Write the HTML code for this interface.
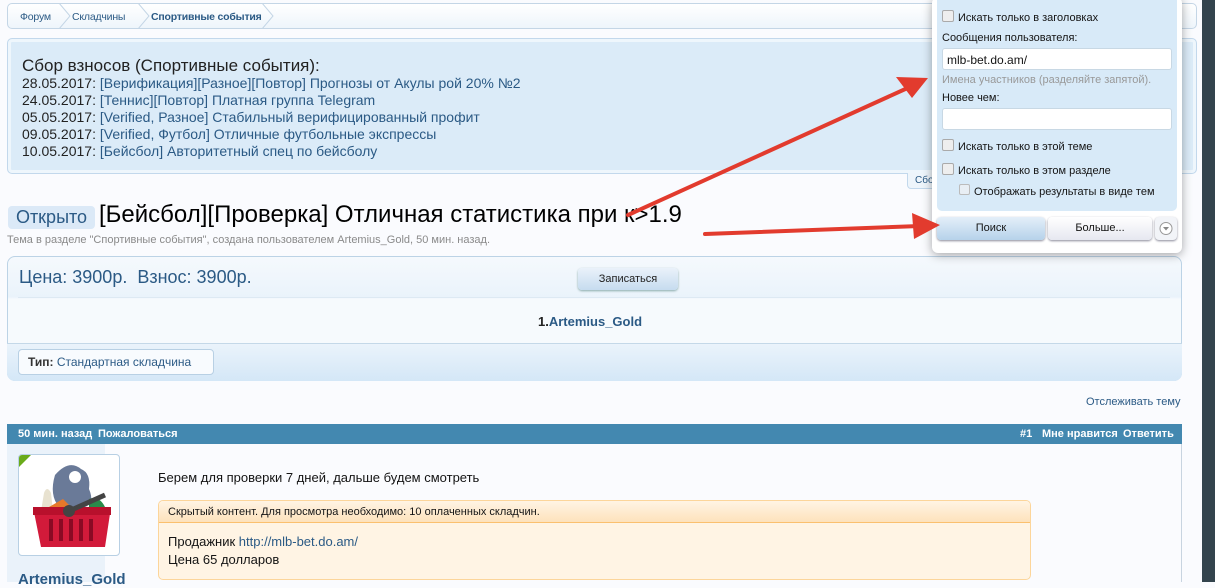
<!DOCTYPE html>
<html><head><meta charset="utf-8"><style>
*{box-sizing:border-box;margin:0;padding:0}
body{width:1215px;height:582px;overflow:hidden;background:#fafbfe;font-family:"Liberation Sans",Arial,sans-serif;position:relative;color:#141414}
.a{position:absolute}
a{color:#2b5a85;text-decoration:none}
.crumb{left:7px;top:3px;width:1190px;height:26px;border:1px solid #c4d6e6;border-radius:5px;background:linear-gradient(#fff,#eef5fb);font-size:10.5px;color:#2b5a85;letter-spacing:-0.2px}
.crumb span{position:absolute;top:7px;white-space:nowrap}
.notice{left:7px;top:38px;width:1190px;height:136px;border:1px solid #c2d8ec;border-radius:5px;background:#dbebf8;box-shadow:inset 0 0 0 3px #eef6fc}
.notice .t{position:absolute;left:14px;top:17px;font-size:17px;color:#222}
.notice .l{position:absolute;left:14px;font-size:14px;color:#222}
.notice .l a{color:#2b5a85}
.badge{left:8px;top:206px;width:87px;height:23px;background:#dbe9f7;border-radius:4px;font-size:18px;color:#2b5a85;text-align:center;line-height:23px}
.title{left:99px;top:201px;font-size:24px;color:#000;white-space:nowrap}
.sub{left:7px;top:234px;font-size:11px;color:#8a8a8a}
.pbox{left:7px;top:256px;width:1175px;height:125px;border:1px solid #bcd3e6;border-radius:8px;background:linear-gradient(#f5f9fd,#eaf3fb 40px,#f6fafd 42px)}
.btn{left:578px;top:268px;width:100px;height:22px;border-radius:4px;background:linear-gradient(#eaf2fa,#c6dcef);box-shadow:0 1px 2px #8aa;font-size:11px;text-align:center;line-height:22px;color:#222}
.hdr{left:7px;top:424px;width:1175px;height:20px;background:#4388b0;color:#fff;font-size:11px;font-weight:bold}
.hdr span{position:absolute;top:4px}
</style></head><body>
<div class="a crumb"><span style="left:12px">Форум</span><span style="left:64px">Складчины</span><span style="left:143px;font-weight:bold">Спортивные события</span>
<svg class="a" style="left:50px;top:-1px" width="14" height="26"><path d="M1 0 L12 13 L1 26" fill="none" stroke="#c4d6e6"/></svg>
<svg class="a" style="left:129px;top:-1px" width="14" height="26"><path d="M1 0 L12 13 L1 26" fill="none" stroke="#c4d6e6"/></svg>
<svg class="a" style="left:253px;top:-1px" width="14" height="26"><path d="M1 0 L12 13 L1 26" fill="none" stroke="#c4d6e6"/></svg>
</div>
<div class="a notice">
<div class="t">Сбор взносов (Спортивные события):</div>
<div class="l" style="top:36px">28.05.2017: <a>[Верификация][Разное][Повтор] Прогнозы от Акулы рой 20% №2</a></div>
<div class="l" style="top:53px">24.05.2017: <a>[Теннис][Повтор] Платная группа Telegram</a></div>
<div class="l" style="top:70px">05.05.2017: <a>[Verified, Разное] Стабильный верифицированный профит</a></div>
<div class="l" style="top:87px">09.05.2017: <a>[Verified, Футбол] Отличные футбольные экспрессы</a></div>
<div class="l" style="top:104px">10.05.2017: <a>[Бейсбол] Авторитетный спец по бейсболу</a></div>
</div>
<div class="a" style="left:907px;top:173px;width:40px;height:16px;border:1px solid #c2d8ec;border-top:none;border-radius:0 0 4px 4px;background:#eef5fb;font-size:10px;color:#2b5a85;padding:2px 0 0 7px;overflow:hidden">Сбор</div>
<div class="a badge">Открыто</div>
<div class="a title">[Бейсбол][Проверка] Отличная статистика при к&gt;1.9</div>
<div class="a sub">Тема в разделе "Спортивные события", создана пользователем Artemius_Gold, 50 мин. назад.</div>
<div class="a pbox">
<div class="a" style="left:11px;top:10px;font-size:18px;color:#2b5a85">Цена: 3900р.&nbsp; Взнос: 3900р.</div>
<div class="a" style="left:10px;top:40px;width:1152px;height:1px;background:#dde9f3"></div>
<div class="a" style="left:530px;top:57px;font-size:13px;font-weight:bold;color:#222">1.<a>Artemius_Gold</a></div>
<div class="a" style="left:-1px;top:86px;width:1175px;height:38px;border-top:1px solid #c4d8e8;border-radius:0 0 8px 8px;background:linear-gradient(#eaf3fb,#d4e7f7)"></div>
<div class="a" style="left:10px;top:92px;width:196px;height:26px;border:1px solid #b8d0e4;border-radius:4px;background:#f8fbfe;font-size:12px;padding:5px 9px;color:#2b5a85;white-space:nowrap"><b style="color:#333">Тип:</b> Стандартная складчина</div>
</div>
<div class="a btn">Записаться</div>
<div class="a" style="left:1086px;top:396px;font-size:11px;color:#2b5a85">Отслеживать тему</div>
<div class="a hdr"><span style="left:11px">50 мин. назад</span><span style="left:91px">Пожаловаться</span><span style="left:1013px">#1</span><span style="left:1035px">Мне нравится</span><span style="left:1116px">Ответить</span></div>
<div class="a" style="left:1181px;top:444px;width:1px;height:138px;background:#c8d4e0"></div>
<div class="a" style="left:7px;top:444px;width:98px;height:138px;background:#eaf2fa"></div>
<div class="a" style="left:18px;top:454px;width:102px;height:102px;border:1px solid #b8d0e4;border-radius:4px;background:#fff;overflow:hidden">
<svg width="100" height="100"><path d="M0 0 L12 0 L0 12Z" fill="#6aab1a"/>
<path d="M36 20 Q50 4 62 14 Q72 18 70 34 Q76 48 66 52 L40 52 Q30 40 36 20Z" fill="#6a7a98"/>
<circle cx="56" cy="22" r="6" fill="#fff"/><path d="M25 38 Q28 30 32 38 L34 56 L22 56Z" fill="#e8e2d0"/>
<path d="M30 52 L44 44 L54 54Z" fill="#e6782a"/><path d="M70 44 Q80 40 86 52 L70 56Z" fill="#2a8a4a"/>
<path d="M14 52 L92 52 L86 92 L22 92Z" fill="#d21a3a"/><path d="M14 52 L92 52 L92 60 L14 60Z" fill="#b8102c"/>
<g stroke="#8a0a24" stroke-width="4"><path d="M32 64v22M42 64v22M52 64v22M62 64v22M72 64v22"/></g>
<path d="M50 56 L86 40" stroke="#444" stroke-width="5"/><circle cx="50" cy="56" r="6" fill="#444"/></svg></div>
<div class="a" style="left:18px;top:571px;font-size:15px;font-weight:bold;color:#2b5a85">Artemius_Gold</div>
<div class="a" style="left:158px;top:470px;font-size:13px">Берем для проверки 7 дней, дальше будем смотреть</div>
<div class="a" style="left:158px;top:500px;width:873px;height:80px;border:1px solid #fcd59a;border-radius:5px;background:#fff4e4;overflow:hidden">
<div style="height:22px;background:linear-gradient(#fff4e4,#fde2bc);border-bottom:1px solid #fbc06e;font-size:11px;padding:5px 9px">Скрытый контент. Для просмотра необходимо: 10 оплаченных складчин.</div>
<div style="font-size:13px;padding:10px 9px;line-height:18px">Продажник <a>http://mlb-bet.do.am/</a><br>Цена 65 долларов</div></div>
<div class="a" style="left:1202px;top:0;width:13px;height:582px;background:#33444d"></div>
<div class="a" style="left:932px;top:-3px;width:250px;height:256px;background:#fff;border-radius:6px;box-shadow:0 2px 10px rgba(0,0,0,.35)">
<div class="a" style="left:5px;top:0;width:240px;height:214px;background:#d8eaf8;border-radius:0 0 5px 5px"></div>
<div class="a" style="left:10px;top:13px;width:12px;height:12px;border:1px solid #aaa;border-radius:2px;background:#eee"></div>
<div class="a" style="left:26px;top:15px;font-size:11px">Искать только в заголовках</div>
<div class="a" style="left:10px;top:35px;font-size:11px">Сообщения пользователя:</div>
<div class="a" style="left:10px;top:51px;width:230px;height:22px;background:#fff;border:1px solid #c8d8e4;border-radius:3px;font-size:12px;padding:4px 4px">mlb-bet.do.am/</div>
<div class="a" style="left:10px;top:77px;font-size:11px;color:#999">Имена участников (разделяйте запятой).</div>
<div class="a" style="left:10px;top:95px;font-size:11px">Новее чем:</div>
<div class="a" style="left:10px;top:111px;width:230px;height:22px;background:#fff;border:1px solid #c8d8e4;border-radius:3px"></div>
<div class="a" style="left:10px;top:142px;width:12px;height:12px;border:1px solid #aaa;border-radius:2px;background:#eee"></div>
<div class="a" style="left:26px;top:144px;font-size:11px">Искать только в этой теме</div>
<div class="a" style="left:10px;top:166px;width:12px;height:12px;border:1px solid #aaa;border-radius:2px;background:#eee"></div>
<div class="a" style="left:26px;top:168px;font-size:11px">Искать только в этом разделе</div>
<div class="a" style="left:27px;top:187px;width:11px;height:11px;border:1px solid #bbb;border-radius:2px;background:#e8eef4"></div>
<div class="a" style="left:42px;top:189px;font-size:11px">Отображать результаты в виде тем</div>
<div class="a" style="left:5px;top:220px;width:108px;height:23px;border-radius:4px;background:linear-gradient(#e4eff9,#b6d2ea);box-shadow:0 1px 2px #889;font-size:11px;text-align:center;line-height:23px">Поиск</div>
<div class="a" style="left:116px;top:220px;width:104px;height:23px;border-radius:4px;background:linear-gradient(#fff,#e6e8f0);box-shadow:0 1px 2px #889;font-size:11px;text-align:center;line-height:23px">Больше...</div>
<div class="a" style="left:223px;top:220px;width:22px;height:23px;border-radius:4px;background:#f2f4f8;box-shadow:0 1px 2px #889"><svg width="22" height="23"><circle cx="11" cy="11.5" r="6" fill="#fff" stroke="#999"/><path d="M8 10 L14 10 L11 13.5Z" fill="#888"/></svg></div>
</div>
<svg class="a" style="left:0;top:0" width="1215" height="582">
<path d="M628 215 L912 86" stroke="#e23b2e" stroke-width="4" stroke-linecap="round"/>
<path d="M928 78 L896 77 L912 98Z" fill="#e23b2e"/>
<path d="M705 234 L920 226" stroke="#e23b2e" stroke-width="4" stroke-linecap="round"/>
<path d="M940 225 L912 213 L914 239Z" fill="#e23b2e"/>
</svg>
</body></html>
